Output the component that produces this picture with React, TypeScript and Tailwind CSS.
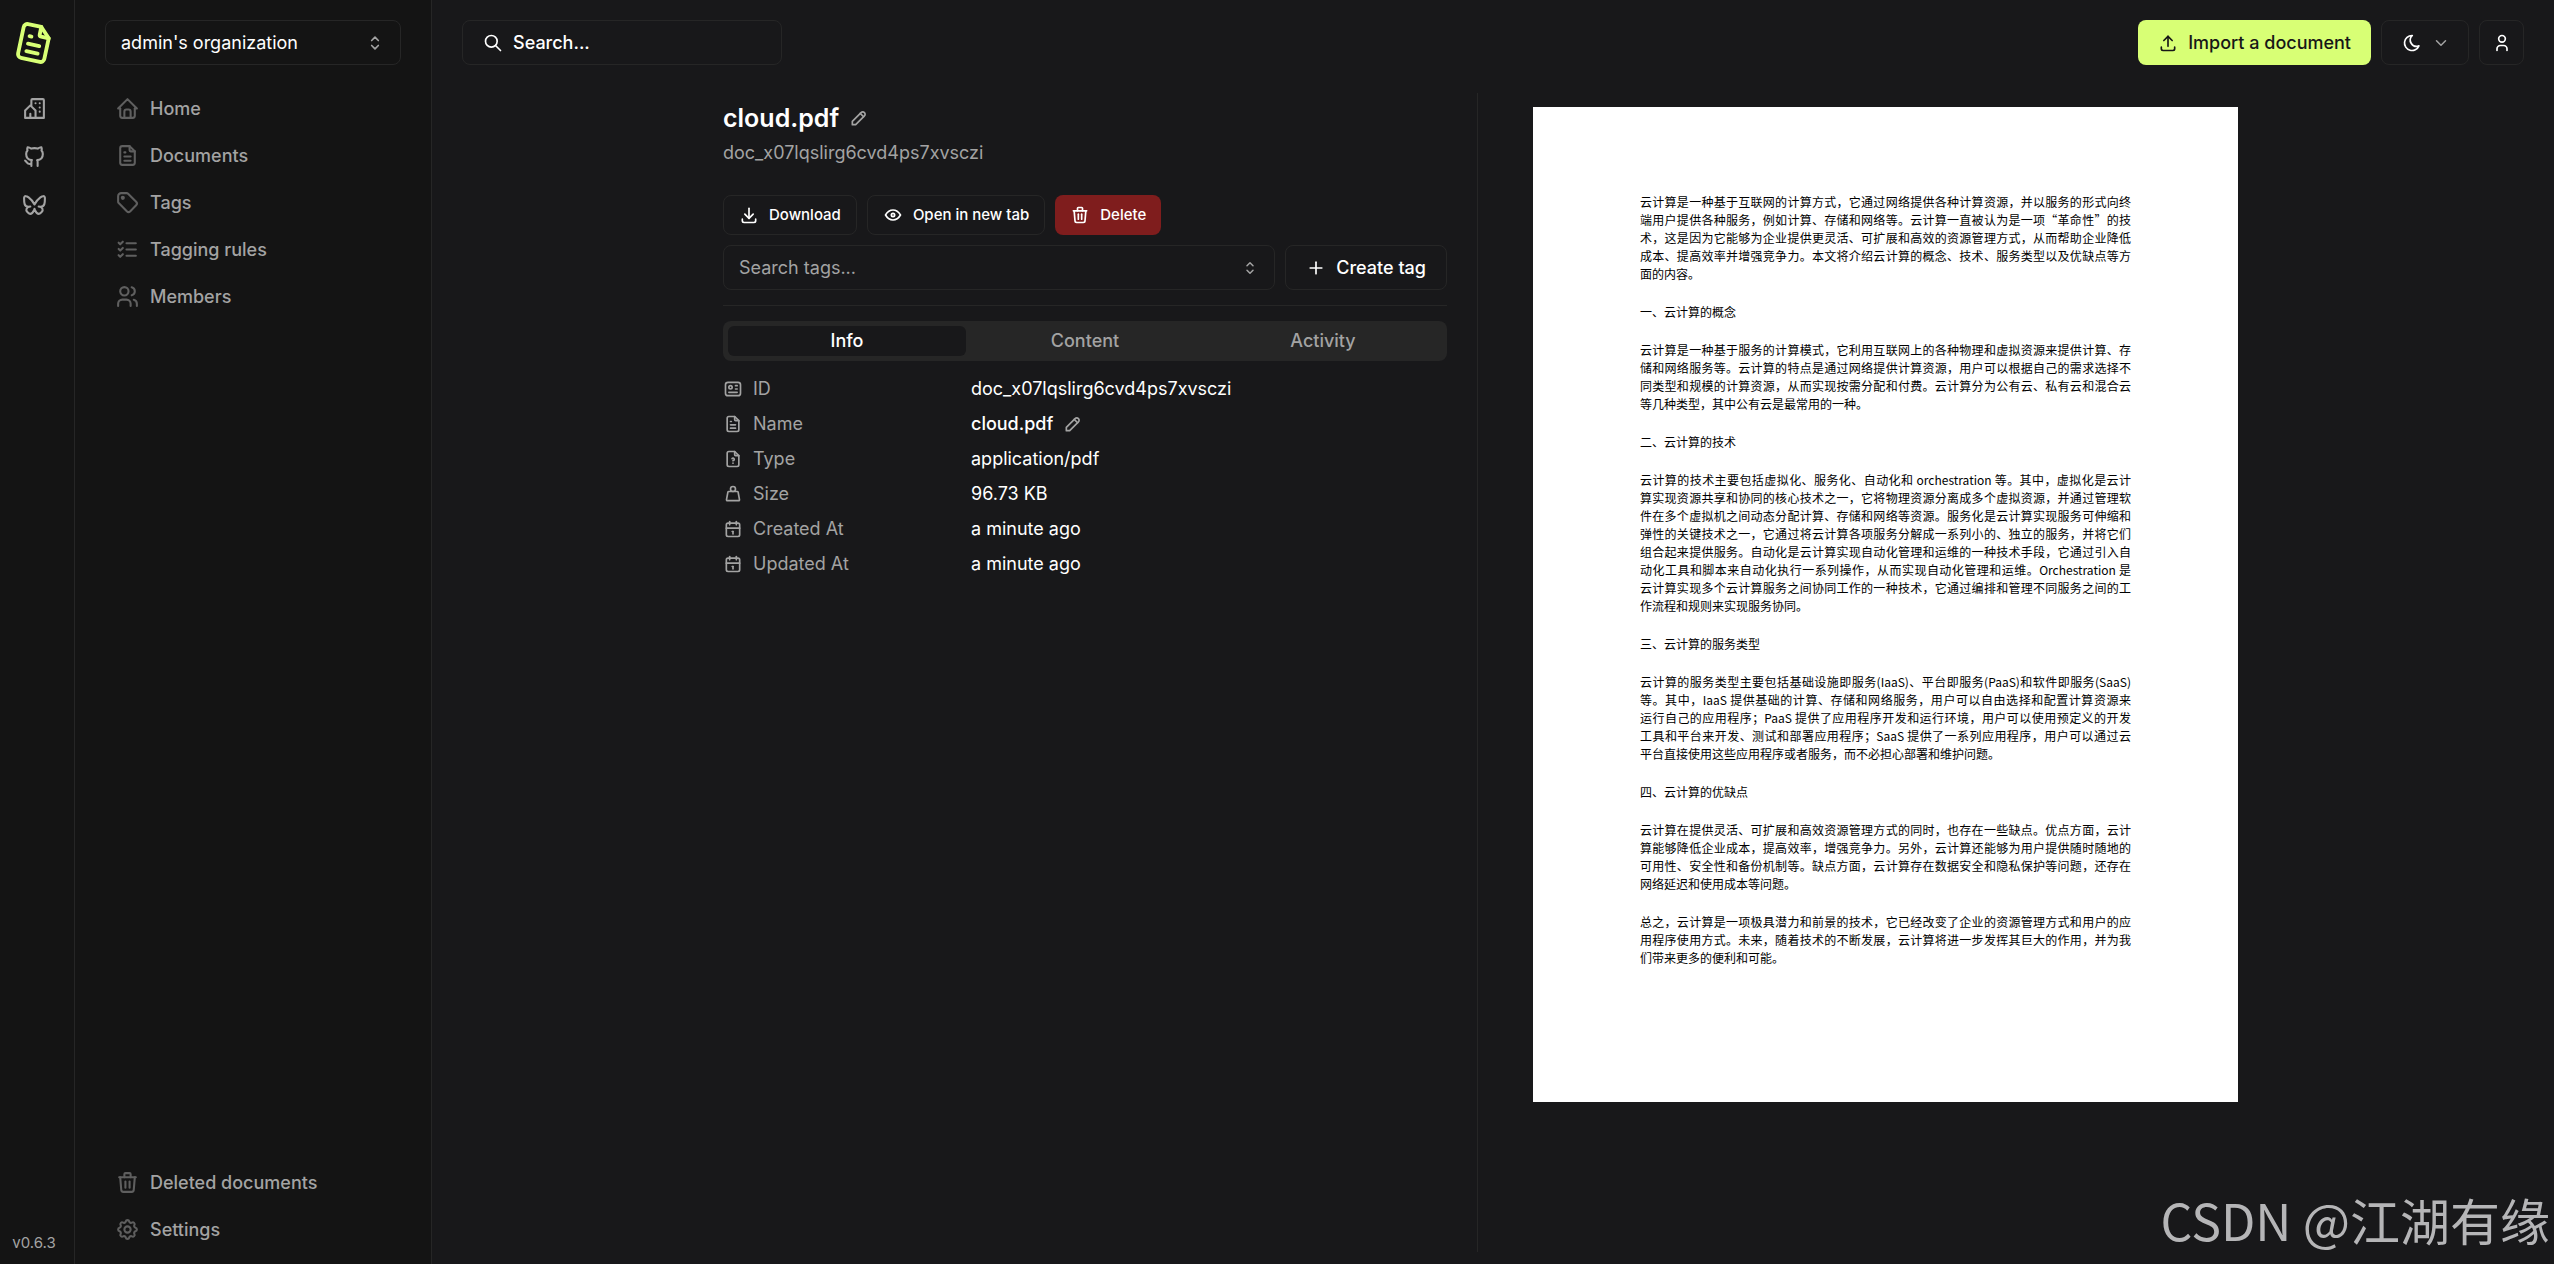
import React from 'react';
import {
    TbBrandBluesky,
    TbBrandGithub,
    TbBuildingCommunity,
    TbCalendar,
    TbChevronDown,
    TbDownload,
    TbEye,
    TbFileText,
    TbFileUnknown,
    TbHome,
    TbId,
    TbListCheck,
    TbMoon,
    TbPencil,
    TbPlus,
    TbSearch,
    TbSelector,
    TbSettings,
    TbTag,
    TbTrash,
    TbUpload,
    TbUser,
    TbUsers,
    TbWeight,
} from 'react-icons/tb';

const mainLinks = [
    { label: 'Home', Icon: TbHome },
    { label: 'Documents', Icon: TbFileText },
    { label: 'Tags', Icon: TbTag },
    { label: 'Tagging rules', Icon: TbListCheck },
    { label: 'Members', Icon: TbUsers },
];

const footerLinks = [
    { label: 'Deleted documents', Icon: TbTrash },
    { label: 'Settings', Icon: TbSettings },
];

const details = [
    { label: 'ID', value: 'doc_x07lqslirg6cvd4ps7xvsczi', Icon: TbId },
    { label: 'Name', value: 'cloud.pdf', Icon: TbFileText, editable: true },
    { label: 'Type', value: 'application/pdf', Icon: TbFileUnknown },
    { label: 'Size', value: '96.73 KB', Icon: TbWeight },
    { label: 'Created At', value: 'a minute ago', Icon: TbCalendar },
    { label: 'Updated At', value: 'a minute ago', Icon: TbCalendar },
];

// One array per paragraph, one string per printed line.
const pdfBlocks = [
    [
        '云计算是一种基于互联网的计算方式，它通过网络提供各种计算资源，并以服务的形式向终',
        '端用户提供各种服务，例如计算、存储和网络等。云计算一直被认为是一项“革命性”的技',
        '术，这是因为它能够为企业提供更灵活、可扩展和高效的资源管理方式，从而帮助企业降低',
        '成本、提高效率并增强竞争力。本文将介绍云计算的概念、技术、服务类型以及优缺点等方',
        '面的内容。',
    ],
    ['一、云计算的概念'],
    [
        '云计算是一种基于服务的计算模式，它利用互联网上的各种物理和虚拟资源来提供计算、存',
        '储和网络服务等。云计算的特点是通过网络提供计算资源，用户可以根据自己的需求选择不',
        '同类型和规模的计算资源，从而实现按需分配和付费。云计算分为公有云、私有云和混合云',
        '等几种类型，其中公有云是最常用的一种。',
    ],
    ['二、云计算的技术'],
    [
        '云计算的技术主要包括虚拟化、服务化、自动化和 orchestration 等。其中，虚拟化是云计',
        '算实现资源共享和协同的核心技术之一，它将物理资源分离成多个虚拟资源，并通过管理软',
        '件在多个虚拟机之间动态分配计算、存储和网络等资源。服务化是云计算实现服务可伸缩和',
        '弹性的关键技术之一，它通过将云计算各项服务分解成一系列小的、独立的服务，并将它们',
        '组合起来提供服务。自动化是云计算实现自动化管理和运维的一种技术手段，它通过引入自',
        '动化工具和脚本来自动化执行一系列操作，从而实现自动化管理和运维。Orchestration 是',
        '云计算实现多个云计算服务之间协同工作的一种技术，它通过编排和管理不同服务之间的工',
        '作流程和规则来实现服务协同。',
    ],
    ['三、云计算的服务类型'],
    [
        '云计算的服务类型主要包括基础设施即服务(IaaS)、平台即服务(PaaS)和软件即服务(SaaS)',
        '等。其中，IaaS 提供基础的计算、存储和网络服务，用户可以自由选择和配置计算资源来',
        '运行自己的应用程序；PaaS 提供了应用程序开发和运行环境，用户可以使用预定义的开发',
        '工具和平台来开发、测试和部署应用程序；SaaS 提供了一系列应用程序，用户可以通过云',
        '平台直接使用这些应用程序或者服务，而不必担心部署和维护问题。',
    ],
    ['四、云计算的优缺点'],
    [
        '云计算在提供灵活、可扩展和高效资源管理方式的同时，也存在一些缺点。优点方面，云计',
        '算能够降低企业成本，提高效率，增强竞争力。另外，云计算还能够为用户提供随时随地的',
        '可用性、安全性和备份机制等。缺点方面，云计算存在数据安全和隐私保护等问题，还存在',
        '网络延迟和使用成本等问题。',
    ],
    [
        '总之，云计算是一项极具潜力和前景的技术，它已经改变了企业的资源管理方式和用户的应',
        '用程序使用方式。未来，随着技术的不断发展，云计算将进一步发挥其巨大的作用，并为我',
        '们带来更多的便利和可能。',
    ],
];

const NavLink: React.FC<{ label: string; Icon: React.ElementType }> = ({ label, Icon }) => (
    <a href="#" className="flex h-[47px] items-center gap-[10px] px-[10px] text-lg font-medium text-[#a3a3a3]">
        <Icon className="size-[25px] text-[#5f5f5f]" />
        {label}
    </a>
);

const IconRail: React.FC = () => (
    <aside className="flex w-[75px] shrink-0 flex-col items-center border-r border-[#262626] bg-[#141414] pt-5 pb-[10px] pr-[6px] text-[#a3a3a3]">
        <a href="#" aria-label="Papra" className="text-[#d8ff75]">
            <TbFileText className="size-[46px] rotate-12" />
        </a>
        <nav className="mt-[18px] flex flex-col items-center">
            <a href="#" aria-label="Demo" className="flex h-12 items-center"><TbBuildingCommunity className="size-[25px]" /></a>
            <a href="#" aria-label="GitHub" className="flex h-12 items-center"><TbBrandGithub className="size-[25px]" /></a>
            <a href="#" aria-label="Bluesky" className="flex h-12 items-center"><TbBrandBluesky className="size-[25px]" /></a>
        </nav>
        <span className="mt-auto text-[15px]">v0.6.3</span>
    </aside>
);

const Sidebar: React.FC = () => (
    <aside className="flex w-[357px] shrink-0 flex-col border-r border-[#262626] bg-[#141414] px-[30px] pt-5 pb-[11px]">
        <button className="flex h-[45px] items-center justify-between rounded-lg border border-[#262626] px-[15px] text-lg text-white">
            admin's organization
            <TbSelector className="size-5 text-[#a3a3a3]" />
        </button>
        <nav className="mt-5 flex flex-col">
            {mainLinks.map((link) => <NavLink key={link.label} {...link} />)}
        </nav>
        <nav className="mt-auto flex flex-col">
            {footerLinks.map((link) => <NavLink key={link.label} {...link} />)}
        </nav>
    </aside>
);

const TopBar: React.FC = () => (
    <header className="flex items-center justify-between px-[30px] pt-5">
        <button className="flex h-[45px] w-[320px] items-center gap-[10px] rounded-lg border border-[#262626] px-5 text-lg font-medium text-white">
            <TbSearch className="size-5" />
            Search...
        </button>
        <div className="flex gap-[10px]">
            <button className="flex h-[45px] items-center gap-[10px] rounded-lg bg-[#d8ff75] px-5 text-lg font-medium text-[#171717]">
                <TbUpload className="size-5" />
                Import a document
            </button>
            <button aria-label="Theme" className="flex h-[45px] items-center gap-[10px] rounded-lg border border-[#262626] pr-[18px] pl-5 text-white">
                <TbMoon className="size-5" />
                <TbChevronDown className="size-[18px] text-[#a3a3a3]" />
            </button>
            <button aria-label="Account" className="flex size-[45px] items-center justify-center rounded-lg border border-[#262626] text-white">
                <TbUser className="size-5" />
            </button>
        </div>
    </header>
);

const DocumentPanel: React.FC = () => (
    <section className="flex w-[755px] shrink-0 flex-col border-r border-[#262626] pt-[14px] pr-[30px] text-lg">
        <div className="flex h-[22px] items-center gap-[10px]">
            <h1 className="text-[25px] font-semibold text-white">cloud.pdf</h1>
            <button aria-label="Rename document" className="text-[#a3a3a3]"><TbPencil className="size-5" /></button>
        </div>
        <p className="mt-[10px] h-7 text-[#a3a3a3]">doc_x07lqslirg6cvd4ps7xvsczi</p>
        <div className="mt-7 flex gap-[10px] text-[15px] font-medium text-white">
            <button className="flex h-10 items-center gap-[10px] rounded-lg border border-[#262626] px-[15px]">
                <TbDownload className="size-5" />
                Download
            </button>
            <button className="flex h-10 items-center gap-[10px] rounded-lg border border-[#262626] px-[15px]">
                <TbEye className="size-5" />
                Open in new tab
            </button>
            <button className="flex h-10 items-center gap-[10px] rounded-lg bg-[#7f1d1d] px-[15px]">
                <TbTrash className="size-5" />
                Delete
            </button>
        </div>
        <div className="mt-[10px] flex gap-[10px]">
            <div className="flex h-[45px] flex-1 items-center rounded-lg border border-[#262626] px-[15px]">
                <input aria-label="Search tags" placeholder="Search tags..." className="min-w-0 flex-1 bg-transparent text-white outline-none placeholder:text-[#a3a3a3]" />
                <TbSelector className="size-[18px] text-[#a3a3a3]" />
            </div>
            <button className="flex h-[45px] items-center gap-[10px] rounded-lg border border-[#262626] px-5 font-medium text-white">
                <TbPlus className="size-5" />
                Create tag
            </button>
        </div>
        <hr className="my-[15px] border-[#262626]" />
        <div role="tablist" className="grid h-10 grid-cols-3 rounded-lg bg-[#262626] p-[5px] font-medium text-[#a3a3a3]">
            <button role="tab" aria-selected="true" className="rounded-md bg-[#18181a] text-white">Info</button>
            <button role="tab" aria-selected="false">Content</button>
            <button role="tab" aria-selected="false">Activity</button>
        </div>
        <table className="mt-[10px] w-full text-left">
            <tbody>
                {details.map(({ label, value, Icon, editable }) => (
                    <tr key={label} className="h-[35px]">
                        <th scope="row" className="w-[248px] font-normal text-[#a3a3a3]">
                            <span className="flex items-center gap-[10px]">
                                <Icon className="size-5" />
                                {label}
                            </span>
                        </th>
                        <td className="text-white">
                            {editable ? (
                                <span className="flex items-center gap-[10px] font-medium">
                                    {value}
                                    <button aria-label="Edit name" className="text-[#a3a3a3]"><TbPencil className="size-5" /></button>
                                </span>
                            ) : value}
                        </td>
                    </tr>
                ))}
            </tbody>
        </table>
    </section>
);

const PdfPreview: React.FC = () => (
    <section className="min-w-0 flex-1 pt-[14px] pl-[55px]">
        <article
            lang="zh-CN"
            className="flex aspect-[705/995] w-[705px] flex-col gap-5 bg-white px-[107px] pt-[86px] font-['Noto_Sans_CJK_SC',sans-serif] text-xs leading-[18px] text-black"
        >
            {pdfBlocks.map((lines) => (
                <p key={lines[0]}>
                    {lines.map((line, i) => (
                        <span
                            key={line}
                            className={i < lines.length - 1 ? 'block [text-align-last:justify]' : 'block'}
                        >
                            {line}
                        </span>
                    ))}
                </p>
            ))}
        </article>
    </section>
);

export default function App() {
    return (
        <div className="relative flex min-h-screen bg-[#18181a] font-['Inter',sans-serif]">
            <IconRail />
            <Sidebar />
            <div className="flex min-w-0 flex-1 flex-col">
                <TopBar />
                <main className="flex flex-1 pt-7 pb-3 pl-[291px]">
                    <DocumentPanel />
                    <PdfPreview />
                </main>
            </div>
            <div className="absolute right-1 bottom-5 font-['Noto_Sans_CJK_SC',sans-serif] text-[50px] leading-none text-[#b5b5b7]">
                CSDN @江湖有缘
            </div>
        </div>
    );
}
